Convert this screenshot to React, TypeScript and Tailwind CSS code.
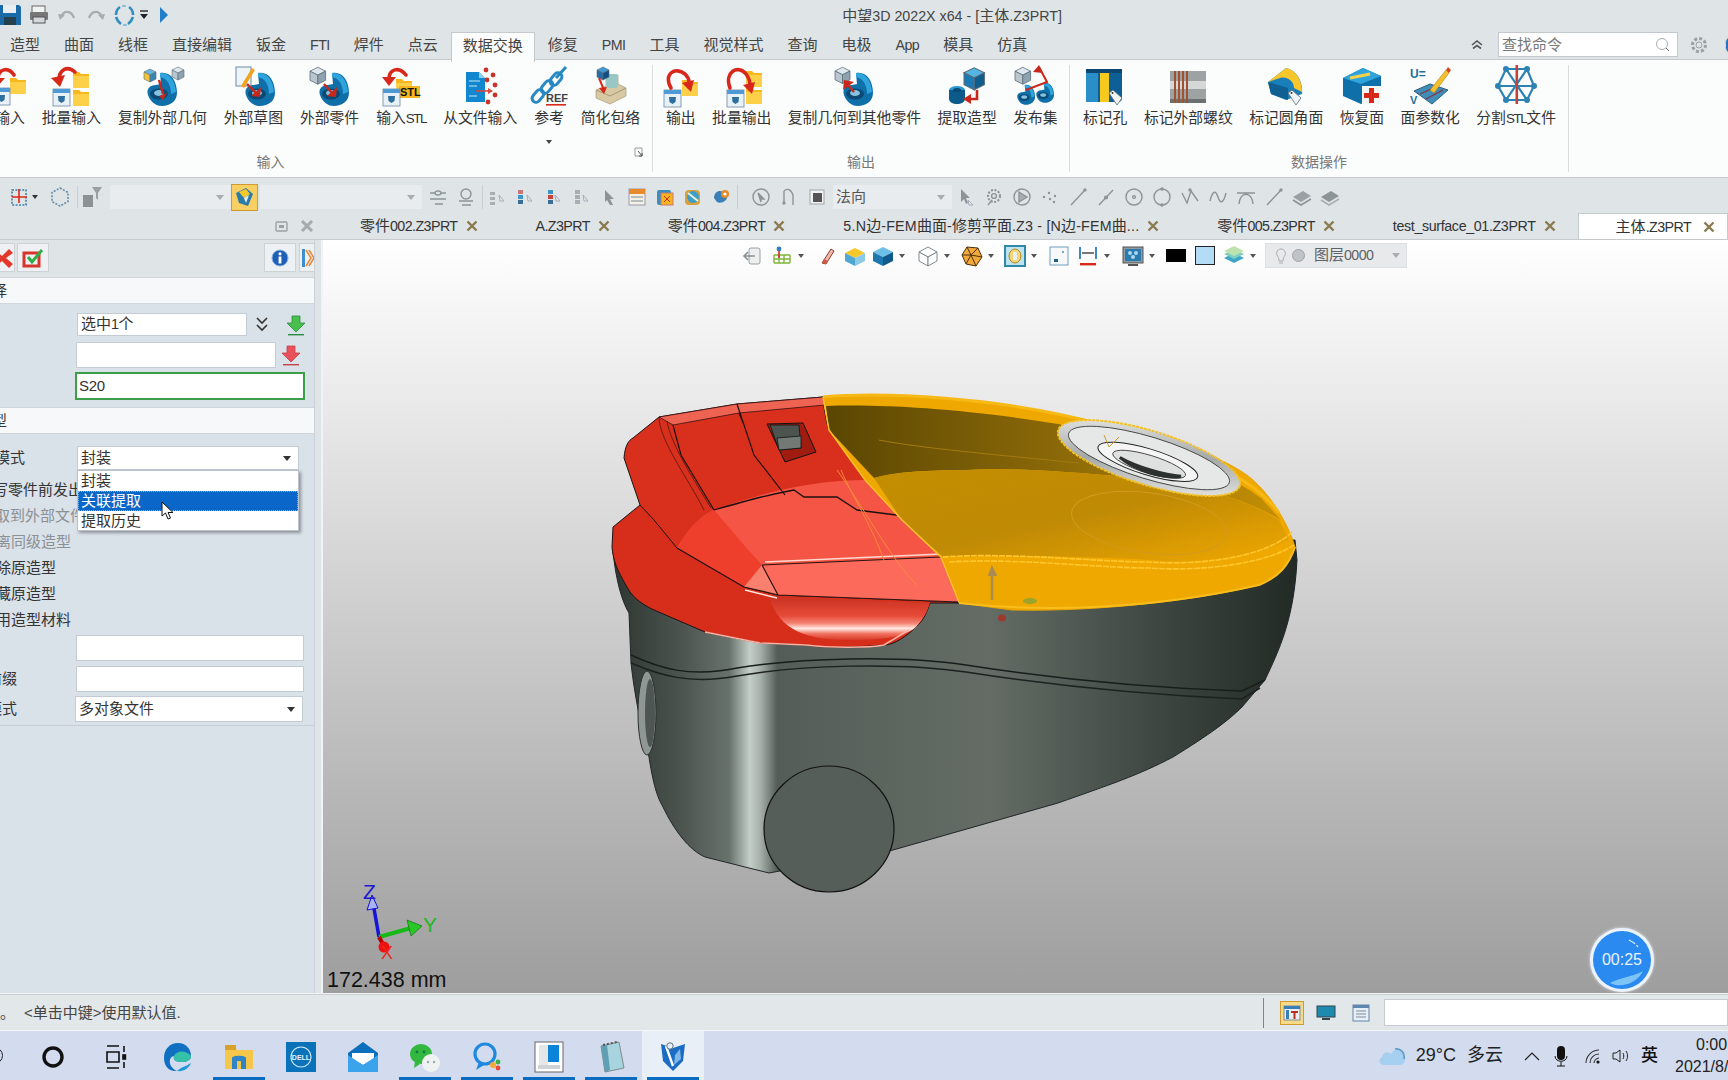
import React from "react";

const T = ({ s, l = "text-[0.95em] tracking-[-0.04em]" }: { s: string; l?: string }) => (
  <>
    {s.split(/([\u4e00-\u9fff。]+)/).filter(Boolean).map((p, i) =>
      /[\u4e00-\u9fff。]/.test(p) ? <span key={i}>{p}</span> : <span key={i} className={l}>{p}</span>
    )}
  </>
);

/* ---------- ribbon icon primitives ---------- */
const Part = ({ t = "" }: { t?: string }) => (
  <g transform={t}>
    <path d="M6 27C4 21 8 17 14 17L19 16L18 5C28 3 35 12 35 25C35 33 28 38 20 38C13 38 8 33 6 27Z" fill="#0f6fa8" />
    <path d="M18 5C27 4 33 12 34 24L29 26C29 17 25 10 18 9Z" fill="#2fa4dc" />
    <ellipse cx="17" cy="26" rx="9" ry="5.5" fill="#0a4a75" />
    <ellipse cx="17" cy="25" rx="5" ry="3" fill="#86c2df" />
  </g>
);
const Cube = ({ t = "", a = "#dfe7ee", b = "#b9c6d0", c = "#8fa2b0" }: { t?: string; a?: string; b?: string; c?: string }) => (
  <g transform={t} stroke="#5a6c78" strokeWidth="0.6">
    <path d="M0 4L6 1L12 4L6 7Z" fill={a} />
    <path d="M0 4L6 7V14L0 11Z" fill={b} />
    <path d="M12 4L6 7V14L12 11Z" fill={c} />
  </g>
);
const Folder = ({ t = "" }: { t?: string }) => (
  <g transform={t}>
    <path d="M0 2H6L8 4H16V18H0Z" fill="#f7b81f" />
    <path d="M0 6H16V18H0Z" fill="#fdd04a" />
  </g>
);
const Win = ({ t = "" }: { t?: string }) => (
  <g transform={t}>
    <rect width="17" height="17" fill="#e8f1f8" stroke="#6b8aa3" strokeWidth="0.8" />
    <rect width="17" height="4" fill="#4d9ad6" />
    <path d="M5 7H12L11.5 12L8.5 14L5.5 12Z" fill="#2f6f9d" />
  </g>
);
const RedArc = ({ d }: { d: string }) => <path d={d} fill="none" stroke="#d8281c" strokeWidth="3.6" strokeLinecap="round" />;
const Tag = ({ t = "" }: { t?: string }) => (
  <g transform={t}>
    <path d="M0 3L4 0L13 8L8 15Z" fill="#f2f4f4" stroke="#5d6b72" strokeWidth="0.8" />
    <circle cx="3.5" cy="3" r="1" fill="#333" />
  </g>
);

const icons: Record<string, React.ReactNode> = {
  imp: (<><Folder t="translate(20 10)" /><Win t="translate(3 22)" /><RedArc d="M24 9C18 0 8 3 8 13" /><path d="M1 12H15L8 20Z" fill="#d8281c" /></>),
  batch: (<><Folder t="translate(22 4)" /><Folder t="translate(22 22)" /><Win t="translate(2 23)" /><RedArc d="M24 6C16 -1 8 4 8 14" /><path d="M0 12L14 9L9 21Z" fill="#d8281c" /></>),
  copyExt: (<><Part t="translate(0 2)" /><Cube t="translate(2 2)" a="#67b6de" b="#f5c33b" c="#3a86b2" /><Cube t="translate(30 0)" /><path d="M17 14L21 28" stroke="#c8281c" strokeWidth="2.4" /><path d="M17 30L25 27L21 34Z" fill="#c8281c" /></>),
  sketch: (<><Part t="translate(7 2)" /><rect x="3" y="1" width="15" height="19" fill="#eef3f7" stroke="#6c8ca5" /><path d="M8 20L19 2L22 4L11 22Z" fill="#f0a41d" /><path d="M14 18L24 28" stroke="#c8281c" strokeWidth="2.4" /><path d="M28 21L27 31L18 30Z" fill="#c8281c" /></>),
  extPart: (<><Part t="translate(4 2)" /><Cube t="translate(0 0) scale(1.3)" /><path d="M14 18L22 27" stroke="#c8281c" strokeWidth="2.4" /><path d="M27 21L26 31L17 30Z" fill="#c8281c" /></>),
  stl: (<><Folder t="translate(15 11)" /><rect x="18" y="20" width="21" height="12" fill="#f4b71f" /><text x="19" y="30" fontSize="11" fontWeight="700" fill="#111" fontFamily="Liberation Sans">STL</text><Win t="translate(2 23)" /><RedArc d="M25 9C18 0 8 3 8 13" /><path d="M1 11H15L8 20Z" fill="#d8281c" /></>),
  file: (<><path d="M6 6H19L25 12V36H6Z" fill="#1187cf" /><path d="M19 6L25 12H19Z" fill="#8fd0f2" /><path d="M9 15H20M9 20H17M9 30H17" stroke="#c6e7f8" strokeWidth="1.2" /><path d="M16 25H29" stroke="#d8483c" strokeWidth="1.6" /><path d="M28 22L33 25L28 28Z" fill="#d8483c" /><g fill="#c8342c"><circle cx="26" cy="4" r="2.4" /><circle cx="33" cy="9" r="2.4" /><circle cx="27" cy="14" r="2.4" /><circle cx="35" cy="19" r="2.4" /><circle cx="35" cy="29" r="2.4" /><circle cx="28" cy="36" r="2.4" /></g></>),
  ref: (<><g fill="none" stroke="#2689c4" strokeWidth="3"><path d="M37 1L27 12" /><rect x="23" y="6" width="8" height="14" rx="4" transform="rotate(40 27 13)" /><rect x="14" y="14" width="8" height="14" rx="4" transform="rotate(40 18 21)" /><rect x="5" y="23" width="8" height="14" rx="4" transform="rotate(40 9 30)" /></g><text x="17" y="36" fontSize="11" fontWeight="700" fill="#444" fontFamily="Liberation Sans">REF</text><rect x="17" y="38" width="20" height="1.6" fill="#d8281c" /></>),
  simp: (<><path d="M6 32L20 38L36 30V22L28 18V9H16V20L6 24Z" fill="#d6c9a4" stroke="#a89a76" strokeWidth="0.7" /><rect x="16" y="8" width="12" height="14" rx="3" fill="#98c8c6" /><path d="M6 24L20 30L36 22" stroke="#a89a76" fill="none" /><Cube t="translate(7 0)" a="#3d9bd8" b="#1f6ea8" c="#124f80" /><path d="M9 12L14 24" stroke="#d8281c" strokeWidth="2" /><path d="M9 22L17 21L14 28Z" fill="#d8281c" /></>),
  exp: (<><Folder t="translate(21 12)" /><Win t="translate(3 24)" /><RedArc d="M10 22C2 8 14 0 24 8C27 11 28 14 28 16" /><path d="M21 17L33 14L30 26Z" fill="#d8281c" /></>),
  bexp: (<><Folder t="translate(24 3)" /><Folder t="translate(24 20)" /><Win t="translate(5 24)" /><RedArc d="M8 22C2 6 16 -2 24 8C27 12 28 16 28 19" /><path d="M21 19L33 16L30 28Z" fill="#d8281c" /></>),
  copyTo: (<><Part t="translate(4 2)" /><Cube t="translate(1 0) scale(1.25)" /><path d="M20 26L14 19" stroke="#c8281c" strokeWidth="2.4" /><path d="M9 24L10 14L20 16Z" fill="#c8281c" /></>),
  extract: (<><Cube t="translate(17 0) scale(1.7)" a="#55b5e4" b="#1b79b3" c="#0f5c8e" /><ellipse cx="10" cy="24" rx="8" ry="4" fill="#2b9ad4" /><path d="M2 24V33C2 36 6 38 10 38C14 38 18 36 18 33V24" fill="#0c5a8c" /><ellipse cx="10" cy="24" rx="4" ry="2" fill="#0a4a75" /><path d="M30 24V33H22" stroke="#c8281c" strokeWidth="2.6" fill="none" /><path d="M24 28V38L16 33Z" fill="#c8281c" /></>),
  publish: (<><Part t="translate(-1 16) scale(.6)" /><Part t="translate(18 14) scale(.6)" /><Cube t="translate(0 0) scale(1.3)" /><path d="M11 24L32 16L24 1" stroke="#c8281c" strokeWidth="2" fill="none" /><path d="M18 6L24 -1L28 7Z" fill="#c8281c" /></>),
  hole: (<><rect x="1" y="3" width="36" height="33" rx="4" fill="#0e5f96" /><rect x="1" y="3" width="12" height="33" fill="#2a8fc8" /><rect x="15" y="3" width="9" height="33" fill="#f5c91d" /><rect x="1" y="3" width="36" height="4" fill="#0a4670" /><Tag t="translate(24 24)" /></>),
  thread: (<><rect x="2" y="5" width="36" height="32" fill="#9da2a2" /><rect x="2" y="15" width="36" height="8" fill="#d6d8d8" /><rect x="2" y="33" width="36" height="4" fill="#6b7070" /><path d="M7 5V37M11 5V37M15 5V37M19 5V37" stroke="#a0512f" strokeWidth="2" /></>),
  fillet: (<><path d="M2 16L20 2C30 4 37 14 36 28L20 34L5 28Z" fill="#1a7fb8" /><path d="M2 16L20 2C30 4 36 14 36 26L28 22C28 16 22 10 14 12Z" fill="#f7c62a" /><path d="M2 16L22 22V34L5 28Z" fill="#0f5f92" /><Tag t="translate(22 24)" /></>),
  restore: (<><path d="M1 12L21 2L39 10V34L19 38L1 30Z" fill="#0f6fa8" /><path d="M1 12L21 2L39 10L19 18Z" fill="#2fa4dc" /><path d="M8 12L28 8" stroke="#f5d24a" strokeWidth="3" /><rect x="20" y="20" width="19" height="18" fill="#f4f6f6" /><path d="M27 22H32V27H37V32H32V37H27V32H22V27H27Z" fill="#d8281c" /></>),
  param: (<><path d="M4 25L20 18L38 24L22 38Z" fill="#3f8eb8" stroke="#2b5f7e" /><path d="M10 28L28 20M16 33L33 24" stroke="#8a2e45" strokeWidth="1.2" /><text x="0" y="12" fontSize="12" fontWeight="700" fill="#1e6f9e" fontFamily="Liberation Sans">U=</text><text x="0" y="38" fontSize="11" fontWeight="700" fill="#1e6f9e" fontFamily="Liberation Sans">V</text><path d="M20 24L36 4L39 7L24 27Z" fill="#f2c12d" stroke="#b9801a" strokeWidth=".6" /><path d="M36 4L38 1L41 4L39 7Z" fill="#d8481c" /></>),
  split: (<><g stroke="#2c82b2" strokeWidth="2.2" fill="none"><path d="M10 3H31L38 20L31 34H10L2 20ZM10 3L31 34M31 3L10 34M2 20H38" /></g><g fill="#2c82b2"><circle cx="10" cy="3" r="3" /><circle cx="31" cy="3" r="3" /><circle cx="38" cy="20" r="3" /><circle cx="31" cy="34" r="3" /><circle cx="10" cy="34" r="3" /><circle cx="2" cy="20" r="3" /></g><rect x="19.5" y="-1" width="2.6" height="39" fill="#c2433a" /></>),
};

type RI = { l: string; i: string; more?: boolean };
const G1: RI[] = [
  { l: "输入", i: "imp" }, { l: "批量输入", i: "batch" }, { l: "复制外部几何", i: "copyExt" }, { l: "外部草图", i: "sketch" },
  { l: "外部零件", i: "extPart" }, { l: "输入STL", i: "stl" }, { l: "从文件输入", i: "file" }, { l: "参考", i: "ref", more: true }, { l: "简化包络", i: "simp" },
];
const G2: RI[] = [
  { l: "输出", i: "exp" }, { l: "批量输出", i: "bexp" }, { l: "复制几何到其他零件", i: "copyTo" }, { l: "提取造型", i: "extract" }, { l: "发布集", i: "publish" },
];
const G3: RI[] = [
  { l: "标记孔", i: "hole" }, { l: "标记外部螺纹", i: "thread" }, { l: "标记圆角面", i: "fillet" }, { l: "恢复面", i: "restore" }, { l: "面参数化", i: "param" }, { l: "分割STL文件", i: "split" },
];

const RibbonItem = ({ it }: { it: RI }) => (
  <div className="flex flex-col items-center relative">
    <div className="w-0 h-[40px] flex justify-center">
      <svg width="40" height="40" viewBox="0 0 40 40" className="overflow-visible shrink-0">{icons[it.i]}</svg>
    </div>
    <div className="mt-[2px] h-[20px] leading-[20px] text-[14.8px] whitespace-nowrap text-[#333]"><T s={it.l} l="text-[0.9em] tracking-[-0.1em]" /></div>
    {it.more && <div className="mt-[12px] w-0 h-0 border-x-[3px] border-x-transparent border-t-[4px] border-t-[#444]" />}
  </div>
);

const RibbonGroup = ({ items, label, w, px, gap, neg, expand }: { items: RI[]; label: string; w: string; px: string; gap: string; neg?: boolean; expand?: boolean }) => (
  <div className={`${w} ${neg ? "ml-[-111px] justify-between" : ""} relative flex flex-col h-full border-r border-[#d9dcde] shrink-0`}>
    <div className={`flex ${gap} pt-[1px] ${px} ${neg ? "justify-end" : ""} h-[88px]`}>
      {items.map((it) => <RibbonItem key={it.l} it={it} />)}
    </div>
    <div className="text-center text-[14px] leading-[20px] text-[#777] mt-[4px]">{label}</div>
    {expand && (
      <svg width="10" height="10" viewBox="0 0 10 10" className="absolute right-[8px] bottom-[15px]"><path d="M1 1H8V9H1Z" fill="none" stroke="#999" /><path d="M4 4L8 9M8 6V9H5" stroke="#555" fill="none" /></svg>
    )}
  </div>
);

/* ---------- toolbar small icons ---------- */
const grey = { fill: "none", stroke: "#8d9498", strokeWidth: 1.4 } as const;
const tbIcons: React.ReactNode[] = [
  <g {...grey}><path d="M2 6H7M13 6H18M7 6a3 2 0 006 0a3 2 0 00-6 0M2 12H18M7 17H15" /></g>,
  <g {...grey}><circle cx="10" cy="7" r="5" /><path d="M3 14H17M6 18H15" /></g>,
  <g><path d="M3 5H8V8H3ZM3 10H8V13H3ZM3 15H8V18H3Z" fill="#a8aeb2" /><path d="M12 8L17 14L13 14Z" fill="#e6e9ea" stroke="#aab" /></g>,
  <g><path d="M3 3H8V7H3Z" fill="#c77" /><path d="M3 8H8V12H3Z" fill="#3a96c8" /><path d="M3 13H8V17H3Z" fill="#3a6e96" /><path d="M12 8L17 14L13 14Z" fill="#e6e9ea" stroke="#aab" /></g>,
  <g><path d="M5 3H10V7H5Z" fill="#3a96c8" /><path d="M5 8H10V12H5Z" fill="#c8443a" /><path d="M5 13H10V17H5Z" fill="#3a6e96" /><path d="M12 8L17 14L13 14Z" fill="#e6e9ea" stroke="#aab" /></g>,
  <g><path d="M4 3H9V7H4ZM4 8H9V12H4ZM4 13H9V17H4Z" fill="#a8aeb2" /><path d="M12 8L17 14L13 14Z" fill="#e6e9ea" stroke="#aab" /></g>,
  <path d="M6 3L15 12L11 12L14 18L11 18L8 13L6 15Z" fill="#8d9498" />,
  <g><rect x="2" y="2" width="16" height="16" fill="#f3f0e6" stroke="#99a" /><rect x="2" y="2" width="16" height="5" fill="#e88a2c" /><path d="M4 10H16M4 14H16" stroke="#7d8a92" /></g>,
  <g><rect x="2" y="3" width="14" height="15" rx="2" fill="#3a8fc0" /><rect x="6" y="6" width="12" height="12" fill="#f5b51f" stroke="#c77" /><path d="M9 9L15 15M15 9L9 15" stroke="#d8281c" /></g>,
  <g><rect x="2" y="3" width="15" height="15" rx="4" fill="#d8a13a" /><circle cx="10" cy="10" r="6" fill="#3d9ec9" /><path d="M5 6L15 14" stroke="#e9f1d8" strokeWidth="2" /></g>,
  <g><path d="M3 11C3 4 10 2 13 6L16 9C17 14 10 17 6 15" fill="#3a7fb8" /><circle cx="14" cy="7" r="4" fill="#e88a2c" /><circle cx="14" cy="7" r="1.6" fill="#fff" /></g>,
  <g {...grey}><circle cx="10" cy="10" r="8" /><path d="M7 6L13 12L10 12L10 15Z" fill="#8d9498" /></g>,
  <g {...grey}><path d="M5 4V16M14 8V18M5 4C8 1 12 2 14 8" /><circle cx="5" cy="16" r="1" /></g>,
  <g><rect x="3" y="3" width="14" height="14" fill="#f1f2f2" stroke="#a0a6a9" /><rect x="6" y="6" width="9" height="9" fill="#555" /></g>,
];
const tbIcons2: React.ReactNode[] = [
  <g><path d="M5 2L14 11L10 11L12 16L10 17L8 12L5 15Z" fill="#8d9498" /><path d="M12 13L17 18L13 18Z" fill="#e6e9ea" stroke="#aab" /></g>,
  <g {...grey}><circle cx="10" cy="9" r="6" strokeDasharray="2 1.5" strokeWidth="2" /><circle cx="10" cy="9" r="2.4" /><path d="M4 18L8 13" /></g>,
  <g {...grey}><circle cx="10" cy="10" r="8" /><path d="M7 5L15 10L7 15Z" fill="#a8aeb2" /></g>,
  <g fill="#8d9498"><circle cx="4" cy="10" r="1.2" /><circle cx="9" cy="6" r="1.2" /><circle cx="10" cy="12" r="1.2" /><circle cx="15" cy="9" r="1.2" /><circle cx="14" cy="15" r="1.2" /></g>,
  <g {...grey}><path d="M3 18L17 3" /><circle cx="17" cy="3" r="1" /></g>,
  <g {...grey}><path d="M3 18L17 3" /><circle cx="10" cy="10.5" r="1.4" /></g>,
  <g {...grey}><circle cx="10" cy="10" r="8" /><circle cx="10" cy="10" r="1.4" /></g>,
  <g {...grey}><circle cx="10" cy="10" r="8" /><circle cx="10" cy="2" r="1" /><circle cx="10" cy="18" r="1" /></g>,
  <g {...grey}><path d="M2 6L7 16L11 4L18 14" /><circle cx="10" cy="3" r="1" /></g>,
  <g {...grey}><path d="M2 14C5 2 8 4 10 10C12 16 15 18 18 6" /></g>,
  <g {...grey}><path d="M3 17C4 4 16 4 17 17M1 6H19" /></g>,
  <g {...grey}><path d="M3 18L17 3" /><circle cx="17" cy="3" r="1" fill="#8d9498" /></g>,
  <g><path d="M1 10L11 4L19 9L9 15Z" fill="#9aa0a3" /><path d="M1 13L9 18L19 12" stroke="#8d9498" strokeWidth="1.6" fill="none" /></g>,
  <g><path d="M1 10L11 4L19 9L9 15Z" fill="#8d9498" /><path d="M1 13L9 18L19 12" stroke="#a8aeb2" strokeWidth="1.6" fill="none" /></g>,
];

const Caret = ({ c = "#a8adb0" }: { c?: string }) => <div className={`w-0 h-0 border-x-[4px] border-x-transparent border-t-[5px]`} style={{ borderTopColor: c }} />;

const Tb = ({ children }: { children: React.ReactNode }) => (
  <div className="w-[28px] flex justify-center shrink-0"><svg width="20" height="20" viewBox="0 0 20 20">{children}</svg></div>
);

const Toolbar = () => (
  <div className="h-[35px] pt-[3px] flex items-center shrink-0 bg-[#dfe4e7]">
    <svg width="20" height="20" viewBox="0 0 20 20" className="ml-[10px]"><rect x="2" y="3" width="14" height="15" fill="none" stroke="#3d7fa6" strokeDasharray="2 1.4" strokeWidth="1.6" /><path d="M9 2V16M2 10H17" stroke="#d8281c" strokeWidth="1.6" /></svg>
    <div className="ml-[2px] w-0 h-0 border-x-[3px] border-x-transparent border-t-[4px] border-t-[#333]" />
    <svg width="22" height="22" viewBox="0 0 22 22" className="ml-[11px]"><path d="M11 2L19 6.5V15.5L11 20L3 15.5V6.5Z" fill="none" stroke="#5f8fa8" strokeWidth="1.6" strokeDasharray="2 1.4" /></svg>
    <div className="ml-[6px] w-px h-[22px] bg-[#c8cdd0]" />
    <svg width="22" height="22" viewBox="0 0 22 22" className="ml-[3px]"><rect x="2" y="9" width="10" height="12" fill="#8c9294" /><path d="M11 1H21L17 7V14L15 12V7Z" fill="#9aa0a2" /></svg>
    <div className="ml-[7px] w-[121px] h-[24px] bg-[#e9ecee] flex items-center justify-end pr-[7px]"><Caret /></div>
    <div className="w-[27px] h-[27px] bg-[#f7cf62] border border-[#d09a30] flex items-center justify-center shrink-0">
      <svg width="23" height="23" viewBox="0 0 23 23"><path d="M3 7L13 2L20 8L15 20L6 17Z" fill="#2a7ca8" /><path d="M6 6L13 3L17 8L11 12Z" fill="#f5c928" /><path d="M11 12L16 9L13 17Z" fill="#e9eef2" /></svg>
    </div>
    <div className="ml-[2px] w-[162px] h-[24px] bg-[#e9ecee] flex items-center justify-end pr-[7px]"><Caret /></div>
    <div className="ml-[2px] flex items-center">
      {tbIcons.slice(0, 2).map((c, i) => <Tb key={i}>{c}</Tb>)}
      <div className="w-px h-[24px] bg-[#c8cdd0] mx-[2px]" />
      <div className="ml-[-2px] flex">{tbIcons.slice(2, 11).map((c, i) => <Tb key={i}>{c}</Tb>)}</div>
      <div className="w-px h-[24px] bg-[#c8cdd0] ml-[2px] mr-[9px]" />
      {tbIcons.slice(11).map((c, i) => <Tb key={i}>{c}</Tb>)}
    </div>
    <div className="ml-[2px] w-[119px] h-[24px] bg-[#e9ecee] flex items-center justify-between pl-[3px] pr-[7px] text-[15px] text-[#555] leading-[24px] shrink-0">
      <span>法向</span><Caret />
    </div>
    <div className="flex">{tbIcons2.map((c, i) => <Tb key={i}>{c}</Tb>)}</div>
  </div>
);

const X = () => (
  <svg width="12" height="12" viewBox="0 0 12 12" className="shrink-0"><path d="M1.5 1.5L10.5 10.5M10.5 1.5L1.5 10.5" stroke="#8b7a4e" strokeWidth="2.4" /></svg>
);

const tabs: { t: string; l?: string }[] = [
  { t: "零件002.Z3PRT" },
  { t: "A.Z3PRT" },
  { t: "零件004.Z3PRT" },
  { t: "5.N边-FEM曲面-修剪平面.Z3 - [N边-FEM曲...", l: "text-[0.95em] tracking-[0.015em]" },
  { t: "零件005.Z3PRT" },
  { t: "test_surface_01.Z3PRT", l: "text-[0.95em] tracking-[-0.025em]" },
];

const TabBar = () => (
  <div className="h-[27px] flex shrink-0 bg-[#dfe4e7] text-[15px] leading-[27px] text-[#333] border-b border-[#c6cacd]">
    <div className="w-[331px] shrink-0 flex items-center pl-[275px] gap-[12px]">
      <svg width="13" height="11" viewBox="0 0 13 11"><rect x="1" y="1" width="11" height="9" rx="1" fill="none" stroke="#9ba1a5" strokeWidth="1.4" /><rect x="4" y="4" width="5" height="3" fill="#9ba1a5" /></svg>
      <svg width="14" height="12" viewBox="0 0 14 12"><path d="M2 1L12 11M12 1L2 11" stroke="#a4aaad" strokeWidth="3" /></svg>
    </div>
    {tabs.map(({ t, l }) => (
      <div key={t} className="pl-[29px] pr-[29px] flex items-center gap-[8px] whitespace-nowrap shrink-0"><span><T s={t} l={l} /></span><X /></div>
    ))}
    <div className="ml-[-7px] flex-1 bg-white border border-b-0 border-[#c6cacd] pl-[37px] flex items-center gap-[12px] whitespace-nowrap"><span><T s="主体.Z3PRT" /></span><X /></div>
  </div>
);

/* ---------- left panel ---------- */
const Field = ({ w, h, ml, children, cls = "" }: { w: string; h: string; ml: string; children?: React.ReactNode; cls?: string }) => (
  <div className={`${w} ${h} ${ml} bg-white border border-[#c3ccd4] ${cls} flex items-center px-[3px] text-[15px] text-[#333] shrink-0`}>{children}</div>
);
const Row = ({ text, ml, grey: g }: { text: string; ml: string; grey?: boolean }) => (
  <div className={`h-[26px] leading-[26px] text-[15px] whitespace-nowrap ${ml} ${g ? "text-[#8b9094]" : "text-[#333]"}`}>{text}</div>
);
const DL = ({ c, l }: { c: string; l: string }) => (
  <svg width="24" height="22" viewBox="0 0 24 22"><path d="M8 2H16V9H21L12 18L3 9H8Z" fill={c} stroke={l} strokeWidth="0.8" /><rect x="4" y="20" width="16" height="1.4" fill={l} /></svg>
);

const Panel = () => (
  <div className="w-[322px] shrink-0 bg-[#d9e1e9] flex relative border-r border-[#f0f2f4]">
    <div className="w-[315px] flex flex-col overflow-hidden">
      <div className="h-[37px] bg-[#dfe4e7] flex items-start pt-[3px] shrink-0">
        <div className="w-[15px] h-[29px] bg-[#eef1f3] border border-[#ccd2d6] border-l-0 flex items-center overflow-hidden">
          <svg width="14" height="22" viewBox="0 0 14 22"><path d="M-6 2L2 9L9 2L13 6L6 11L13 17L9 21L2 14L-6 21Z" fill="#e2382b" /></svg>
        </div>
        <div className="ml-[2px] w-[32px] h-[29px] bg-[#eef1f3] border border-[#ccd2d6] flex items-center justify-center">
          <svg width="22" height="20" viewBox="0 0 22 20"><rect x="2" y="5" width="15" height="13" fill="none" stroke="#d8362b" strokeWidth="3" /><path d="M6 9L10 14L20 2" fill="none" stroke="#2fae44" strokeWidth="3" /></svg>
        </div>
        <div className="ml-auto w-[32px] h-[29px] bg-[#eef1f3] border border-[#ccd2d6] flex items-center justify-center">
          <svg width="20" height="20" viewBox="0 0 20 20"><circle cx="10" cy="10" r="8" fill="#1f5fb8" stroke="#8ab4e0" /><rect x="8.6" y="8.5" width="2.8" height="7" fill="#fff" /><circle cx="10" cy="5.8" r="1.6" fill="#fff" /></svg>
        </div>
        <div className="ml-[3px] mr-[-1px] w-[16px] h-[29px] bg-[#eef1f3] border border-[#ccd2d6] flex items-center justify-center overflow-hidden">
          <svg width="14" height="22" viewBox="0 0 14 22"><rect x="2" y="2" width="3" height="18" fill="#3f8ed0" /><path d="M6 3L11 11L6 19M9 3L14 11L9 19" fill="none" stroke="#e8873a" strokeWidth="1.5" /></svg>
        </div>
      </div>
      <div className="h-[27px] bg-[#f6f8f9] border-y border-[#cfd6dc] text-[15px] leading-[26px] text-[#333] ml-[-8px] pl-0 shrink-0">择</div>
      <div className="h-[99px] pt-[9px] flex flex-col shrink-0">
        <div className="flex items-center h-[23px]">
          <Field w="w-[170px]" h="h-[23px]" ml="ml-[77px]"><T s="选中1个" /></Field>
          <svg width="14" height="16" viewBox="0 0 14 16" className="ml-[8px]"><path d="M2 1L7 6L12 1M2 8L7 13L12 8" fill="none" stroke="#333" strokeWidth="1.6" /></svg>
          <div className="ml-[15px]"><DL c="#49c04e" l="#2d8c43" /></div>
        </div>
        <div className="flex items-center h-[26px] mt-[6px]">
          <Field w="w-[200px]" h="h-[26px]" ml="ml-[76px]" />
          <div className="ml-[3px]"><DL c="#e8525a" l="#c94048" /></div>
        </div>
        <Field w="w-[230px]" h="h-[28px]" ml="ml-[75px] mt-[4px]" cls="!border-[#3c9e45] border-2 !px-[2px] tracking-[-0.02em]">S20</Field>
      </div>
      <div className="mt-[4px] h-[27px] bg-[#f6f8f9] border-y border-[#cfd6dc] text-[15px] leading-[26px] text-[#333] ml-[-8px] shrink-0">型</div>
      <div className="relative pt-[12px] flex-1 flex flex-col border-b-0">
        <div className="flex items-center h-[24px]">
          <div className="ml-[-5px] w-[82px] text-[15px] text-[#333] leading-[24px] whitespace-nowrap">模式</div>
          <div className="w-[222px] h-[24px] bg-white border border-[#c3ccd4] flex items-center justify-between pl-[3px] pr-[7px] text-[15px] text-[#333]"><span>封装</span><div className="w-0 h-0 border-x-[4px] border-x-transparent border-t-[5px] border-t-[#333]" /></div>
        </div>
        <div className="mt-[7px]">
          <Row text="写零件前发出" ml="ml-[-7px]" />
          <Row text="取到外部文件" ml="ml-[-5px]" grey />
          <Row text="离同级造型" ml="ml-[-4px]" grey />
          <Row text="除原造型" ml="ml-[-4px]" />
          <Row text="藏原造型" ml="ml-[-4px]" />
          <Row text="用造型材料" ml="ml-[-4px]" />
        </div>
        <Field w="w-[228px]" h="h-[26px]" ml="ml-[76px] mt-[2px]" />
        <div className="flex items-center mt-[5px] h-[26px]">
          <div className="ml-[-13px] w-[89px] text-[15px] leading-[26px] text-[#333] whitespace-nowrap">前缀</div>
          <Field w="w-[228px]" h="h-[26px]" ml="" />
        </div>
        <div className="flex items-center mt-[4px] h-[26px]">
          <div className="ml-[-13px] w-[88px] text-[15px] leading-[26px] text-[#333] whitespace-nowrap">模式</div>
          <div className="w-[228px] h-[26px] bg-white border border-[#c3ccd4] flex items-center justify-between pl-[3px] pr-[7px] text-[15px] text-[#333]"><span>多对象文件</span><div className="w-0 h-0 border-x-[4px] border-x-transparent border-t-[5px] border-t-[#333]" /></div>
        </div>
        <div className="mt-[3px] h-px bg-[#c6ced5]" />

        <div className="absolute left-[77px] top-[36px] w-[222px] h-[61px] bg-white border border-[#b9c2ca] shadow-[2px_2px_3px_rgba(0,0,0,0.35)] text-[15px] text-[#333] leading-[20px] flex flex-col">
          <div className="h-[20px] pl-[3px]">封装</div>
          <div className="h-[20px] pl-[2px] bg-[#0a66c8] text-white border border-dotted border-[#7fb0e0] leading-[18px]">关联提取</div>
          <div className="h-[20px] pl-[3px]">提取历史</div>
          <svg width="14" height="20" viewBox="0 0 14 20" className="absolute left-[83px] top-[30px]"><path d="M1 1V15L4.5 12L7 18L9.5 17L7 11.5H12Z" fill="#fff" stroke="#111" strokeWidth="1" /></svg>
        </div>
      </div>
    </div>
    <div className="w-[7px] bg-[#dfe4e7] border-l border-[#c9d0d6]" />
  </div>
);

/* ---------- 3D model drawing ---------- */
const Model = () => (
  <svg className="absolute inset-0" width="1404" height="754" viewBox="324 240 1404 754">
    <defs>
      <linearGradient id="body" x1="0" x2="1" y1="0" y2="0">
        <stop offset="0" stopColor="#2e3632" />
        <stop offset="0.1" stopColor="#4c5450" />
        <stop offset="0.17" stopColor="#68726c" />
        <stop offset="0.2" stopColor="#c4cec8" />
        <stop offset="0.215" stopColor="#a8b2ac" />
        <stop offset="0.24" stopColor="#555d58" />
        <stop offset="0.55" stopColor="#646c65" />
        <stop offset="0.8" stopColor="#3e4642" />
        <stop offset="1" stopColor="#222a26" />
      </linearGradient>
      <linearGradient id="up" x1="0" x2="1" y1="0" y2="0">
        <stop offset="0" stopColor="#5a4602" />
        <stop offset="0.5" stopColor="#8a6808" />
        <stop offset="1" stopColor="#c48f05" />
      </linearGradient>
      <linearGradient id="lowy" x1="0" x2="1" y1="0" y2="1">
        <stop offset="0" stopColor="#c48e00" />
        <stop offset="0.5" stopColor="#bf8a05" />
        <stop offset="1" stopColor="#f0a800" />
      </linearGradient>
      <linearGradient id="bulge" x1="0" x2="0" y1="0" y2="1">
        <stop offset="0" stopColor="#c9301f" />
        <stop offset="0.45" stopColor="#e64a38" />
        <stop offset="0.62" stopColor="#f68474" />
        <stop offset="0.74" stopColor="#ffe9e2" />
        <stop offset="0.86" stopColor="#f0705e" />
        <stop offset="1" stopColor="#d83a26" />
      </linearGradient>
      <linearGradient id="ring" x1="0" x2="1" y1="0" y2="1">
        <stop offset="0" stopColor="#f4f5f4" />
        <stop offset="0.5" stopColor="#a5a9a8" />
        <stop offset="1" stopColor="#f6f6f4" />
      </linearGradient>
    </defs>

    <path d="M614 550C616 575 622 600 630 613L632 663C636 700 645 740 650 757C655 790 660 800 664 807C675 830 690 850 706 857L770 873L894 850L1059 803C1110 785 1140 775 1174 757C1210 735 1230 720 1243 707L1266 680C1280 650 1295 620 1298 560L1296 540Z" fill="url(#body)" stroke="#20262a" strokeWidth="1" />
    <path d="M632 663C660 675 690 685 738 676C800 665 900 662 967 672C1050 685 1150 695 1243 699L1261 688" fill="none" stroke="#1c2220" strokeWidth="1.5" />
    <path d="M632 655C660 668 690 678 738 668C800 658 900 655 967 665C1050 678 1150 688 1243 691L1266 680" fill="none" stroke="#181e1c" strokeWidth="1.5" />
    <ellipse cx="648" cy="713" rx="9" ry="42" fill="#8f9794" stroke="#2a302d" />
    <ellipse cx="651" cy="713" rx="5" ry="34" fill="#4e5552" />

    {/* red lower rim */}
    <path d="M960 603L931 603C928 612 925 620 917 627C908 636 895 645 885 645C850 648 820 648 807 645L761 643L706 632L655 610C640 603 632 595 628 587C618 570 614 560 613 547L614 527L641 505L780 560Z" fill="#d72e1c" stroke="#1a1414" />
    <path d="M770 596L931 603C928 612 925 618 917 627C905 638 880 640 850 640C810 640 780 632 770 596Z" fill="url(#bulge)" />
    <path d="M706 632L761 643L807 645C830 648 870 648 885 645L910 630" fill="none" stroke="#ffb0a0" strokeWidth="1.5" />

    {/* upper lid */}
    <path d="M641 505L625 458C626 445 630 440 634 438L660 417L738 404L824 397C826 420 830 430 830 430L866 480L903 520L942 557L960 602L779 595L745 587L678 548L655 520Z" fill="#d92f1d" stroke="#1a1414" />
    <path d="M660 417L738 404L824 397L826 405L740 413L674 425Z" fill="#ef6353" stroke="#311" strokeWidth=".8" />
    <path d="M690 530C700 518 708 513 715 510C770 490 820 480 866 480L903 520L942 557L960 602L779 595L745 587L678 548Z" fill="#f45545" />
    <path d="M678 548C682 540 686 535 690 530C700 518 708 513 715 510L745 545L763 565L745 587Z" fill="#ee3f2c" />
    <path d="M763 565L942 557L960 602L779 595Z" fill="#fb6a5b" />
    <path d="M745 587L763 565L779 595Z" fill="#f97f6e" />
    <path d="M715 510C760 497 770 495 795 490L805 497L838 497L858 510L905 516" fill="none" stroke="#1f1010" strokeWidth="1.3" />
    <path d="M674 425L682 455L715 510M738 404L755 455L786 495M740 413L745 425" fill="none" stroke="#1f1010" strokeWidth="1.2" />
    <path d="M660 417C660 440 690 480 705 510M668 421C672 445 695 480 712 508" fill="none" stroke="#701c10" />
    <path d="M763 565L942 557M745 587L779 595L960 602M763 565L779 595M678 548L745 587" fill="none" stroke="#2a1410" strokeWidth="1.2" />
    <path d="M766 562L942 554" stroke="#ffd9d0" strokeWidth="1.5" />
    <path d="M746 590L778 598" stroke="#ffe5de" strokeWidth="1.5" />
    <path d="M842 470C855 500 870 520 885 560M838 470C860 500 892 560 918 585" fill="none" stroke="#f88a3a" strokeWidth="1" />
    {/* latch */}
    <path d="M768 424L804 423L817 452L786 462Z" fill="#a01c10" stroke="#111" strokeWidth="1" />
    <path d="M771 425L800 425L802 448L780 450Z" fill="#4c5450" stroke="#111" strokeWidth=".8" />
    <path d="M778 438L802 436L802 448L780 450Z" fill="#727a76" stroke="#111" strokeWidth=".8" />

    {/* yellow cover */}
    <path d="M824 397C850 394 900 395 940 398C1040 405 1130 428 1197 450C1230 462 1250 475 1257 483C1270 495 1288 520 1296 547C1290 565 1280 577 1260 585C1200 600 1100 612 1013 610L960 603L942 557L903 520L866 480L830 430Z" fill="#efa800" stroke="#e8a400" strokeWidth="1" />
    <path d="M827 406C880 404 960 408 1059 424C1130 438 1210 460 1262 498L1282 520C1240 495 1180 480 1105 475C1050 470 1000 468 967 470C930 470 895 472 875 478L830 430Z" fill="url(#up)" />
    <path d="M875 478C895 472 930 470 967 470C1000 468 1050 470 1105 475C1180 480 1240 495 1280 520L1290 540C1260 555 1200 565 1150 560C1080 556 1000 555 944 557L903 520Z" fill="url(#lowy)" />
    <path d="M944 557C1010 552 1100 562 1150 562C1210 566 1270 555 1293 532M950 562C1020 558 1100 568 1150 568C1210 572 1270 562 1295 545" fill="none" stroke="#ffc62e" strokeWidth="1.6" strokeDasharray="6 1" />
    <path d="M824 397C880 392 1000 396 1105 425C1170 445 1250 470 1280 513" fill="none" stroke="#f7b915" strokeWidth="3" />
    <path d="M960 603C1040 612 1150 610 1260 585C1280 577 1290 565 1296 547" fill="none" stroke="#f9bd1c" strokeWidth="2" />
    <path d="M824 397L830 430L866 480L903 520L942 557L960 602" fill="none" stroke="#ffc12a" strokeWidth="1.4" />
    <ellipse cx="1150" cy="523" rx="78" ry="30" fill="none" stroke="#d29a20" strokeWidth="1" transform="rotate(8 1150 523)" />
    <path d="M880 440C920 448 1000 455 1080 463" fill="none" stroke="#a37a12" strokeWidth="1" />

    {/* ring */}
    <g transform="rotate(17 1150 458)">
      <ellipse cx="1150" cy="458" rx="95" ry="27" fill="url(#ring)" stroke="#f2c12a" strokeDasharray="3 1" strokeWidth="2" />
      <ellipse cx="1150" cy="458" rx="84" ry="21" fill="#e6e8e7" stroke="#333" strokeWidth=".8" />
      <ellipse cx="1150" cy="462" rx="52" ry="13" fill="#f4f5f4" stroke="#222" strokeWidth="1" />
      <ellipse cx="1152" cy="464" rx="38" ry="9" fill="#dfe1e0" stroke="#333" strokeWidth=".8" />
      <path d="M1122 466C1140 474 1170 474 1186 466C1170 470 1140 470 1122 466Z" fill="#2c302f" stroke="#2c302f" strokeWidth="3" />
    </g>
    <path d="M1105 435L1110 447L1120 437" fill="none" stroke="#c99a30" />

    {/* origin triad ghost */}
    <path d="M993 600L993 570M990 576L993 568L997 576" stroke="#a98c52" strokeWidth="2.5" fill="#a98c52" />
    <ellipse cx="1031" cy="601" rx="7" ry="3" fill="#9aa32b" />
    <ellipse cx="1003" cy="618" rx="4" ry="3.5" fill="#9c3b2c" />

    {/* wheel */}
    <ellipse cx="830" cy="829" rx="65" ry="63" fill="#565e59" stroke="#111" strokeWidth="1.2" />

    {/* axis triad */}
    <path d="M380 937L373 897" stroke="#1414d8" strokeWidth="3.5" />
    <path d="M373 895L368 910L379 908Z" fill="#a9b4f0" stroke="#1414d8" />
    <path d="M380 937L412 928" stroke="#18b818" strokeWidth="4" />
    <path d="M423 926L408 920L412 936Z" fill="#28c828" stroke="#107010" strokeWidth=".7" />
    <path d="M380 937L385 946" stroke="#b00" strokeWidth="4" />
    <circle cx="385" cy="947" r="5.5" fill="#f01010" />
  </svg>
);

const Viewport = () => (
  <div className="relative flex-1 bg-linear-to-b from-[#ffffff] to-[#9e9e9e] border-l border-[#f2f3f4] overflow-hidden">
    <Model />
    <div className="absolute left-[40px] top-[640px] text-[21px] leading-[24px] text-[#1b1bd0]">Z</div>
    <div className="absolute left-[100px] top-[673px] text-[21px] leading-[24px] text-[#1fb81f]">Y</div>
    <div className="absolute left-[58px] top-[702px] text-[18px] leading-[22px] text-[#e82a1e]">X</div>
    <div className="absolute left-[4px] bottom-[0px] text-[21.5px] leading-[26px] text-[#111]">172.438 mm</div>

    <div className="absolute left-[418px] top-[3px] flex items-center h-[25px]">
      <VT />
    </div>

    <div className="absolute left-[1267px] top-[688px] w-[64px] h-[64px] rounded-full bg-[#2b8af0] border-[3px] border-white/90 shadow-[0_0_3px_rgba(255,255,255,0.8)] flex items-center justify-center text-[16px] text-[#e8f3ff] overflow-hidden">
      <svg width="58" height="58" viewBox="0 0 58 58" className="absolute"><path d="M36 9C40 11 43 13 45 16" fill="none" stroke="#e8f3ff" strokeWidth="1.2" strokeDasharray="7 2" /><path d="M17 52C28 46 40 46 50 40C44 52 28 58 17 52Z" fill="#7cc4f6" /></svg>
      <span className="relative">00:25</span>
    </div>
  </div>
);

const mini = "w-0 h-0 border-x-[3px] border-x-transparent border-t-[4px] border-t-[#555] ml-[5px] shrink-0";
const VIc = ({ c, w = 22, cls = "" }: { c: React.ReactNode; w?: number; cls?: string }) => (
  <svg width={w} height="22" viewBox="0 0 22 22" className={`shrink-0 ${cls}`}>{c}</svg>
);
const VT = () => (
  <>
    <VIc c={<g><rect x="8" y="3" width="11" height="16" rx="2" fill="#eee" stroke="#9aa0a3" /><path d="M14 11H3M7 7L3 11L7 15" fill="none" stroke="#8a9094" strokeWidth="1.6" /></g>} />
    <VIc cls="ml-[8px]" c={<g><path d="M3 10H19M3 14H19M3 18H19M3 10V18M8 10V18M13 10V18M19 10V18" stroke="#7fb53c" strokeWidth="1.4" fill="none" /><circle cx="8" cy="4" r="2.4" fill="#2f7fc0" /><path d="M8 6V13" stroke="#d8281c" strokeWidth="1.6" /></g>} />
    <div className={mini} />
    <VIc cls="ml-[11px]" c={<g><path d="M7 18L16 4L19 6L11 19Z" fill="#f2b8a8" stroke="#8a3c30" /><path d="M7 18L9 14L13 16L11 19Z" fill="#d05a40" /></g>} />
    <VIc cls="ml-[7px]" c={<g><path d="M1 8L11 3L21 8L11 13Z" fill="#f5c728" /><path d="M1 8L11 13V21L1 16Z" fill="#4fa8d4" /><path d="M21 8L11 13V21L21 16Z" fill="#8ccbe8" /></g>} />
    <VIc cls="ml-[6px]" c={<g><path d="M1 7L11 2L21 7L11 12Z" fill="#6cc0e8" /><path d="M1 7L11 12V21L1 16Z" fill="#1d77ad" /><path d="M21 7L11 12V21L21 16Z" fill="#0f5a8c" /></g>} />
    <div className={mini} />
    <VIc cls="ml-[12px]" c={<g fill="#fdfdfd" stroke="#7f8a90"><path d="M2 7L11 2L20 7L11 12Z" /><path d="M2 7L11 12V21L2 16Z" /><path d="M20 7L11 12V21L20 16Z" /></g>} />
    <div className={mini} />
    <VIc cls="ml-[11px]" c={<g><path d="M6 2L17 3L21 12L15 21L5 19L1 10Z" fill="#f3a83a" stroke="#4a3210" /><path d="M6 2L10 10L17 3M10 10L21 12M10 10L15 21M10 10L5 19M10 10L1 10" stroke="#4a3210" fill="none" /></g>} />
    <div className={mini} />
    <VIc cls="ml-[10px]" c={<g><rect x="1" y="1" width="20" height="20" fill="#bfe3f0" stroke="#2f8aa8" strokeWidth="2" /><ellipse cx="11" cy="11" rx="6" ry="7" fill="#f3d774" stroke="#b58a20" /><rect x="9" y="7" width="4" height="8" fill="#eee" /></g>} />
    <div className={mini} />
    <VIc cls="ml-[11px]" c={<g><rect x="2" y="2" width="18" height="18" fill="#f6f8f9" stroke="#6fa0bd" /><rect x="6" y="14" width="4" height="3" fill="#1d5f8c" /><rect x="14" y="6" width="2" height="2" fill="#7ab" /></g>} />
    <VIc cls="ml-[7px]" c={<g><path d="M3 2V14M19 2V14" stroke="#3a8abf" strokeWidth="2" /><path d="M5 8H17" stroke="#555" strokeWidth="1.6" /><rect x="3" y="18" width="16" height="2.4" fill="#d8281c" /></g>} />
    <div className={mini} />
    <VIc cls="ml-[12px]" c={<g><rect x="1" y="2" width="20" height="16" fill="#8f9aa1" stroke="#555" /><rect x="3" y="4" width="16" height="12" fill="#2a7bb0" /><circle cx="8" cy="8" r="2" fill="#a9d8ee" /><circle cx="14" cy="8" r="2" fill="#a9d8ee" /><circle cx="11" cy="12" r="2" fill="#a9d8ee" /><rect x="6" y="19" width="10" height="2" fill="#555" /></g>} />
    <div className={mini} />
    <div className="ml-[11px] w-[20px] h-[13px] bg-black shrink-0" />
    <div className="ml-[9px] w-[20px] h-[19px] bg-[#b4dcf6] border border-[#222] shrink-0" />
    <VIc cls="ml-[8px]" c={<g><path d="M1 13L11 18L21 13L11 8Z" fill="#3fa6c8" /><path d="M1 9L11 14L21 9L11 4Z" fill="#7fcfc0" /><path d="M1 6L11 11L21 6L11 1Z" fill="#bfe3b0" /></g>} />
    <div className={mini} />
    <div className="ml-[9px] w-[142px] h-[25px] bg-[#e7e9ea] border border-[#dde0e2] flex items-center pl-[9px] pr-[6px] text-[15px] text-[#5f6366] shrink-0">
      <svg width="12" height="18" viewBox="0 0 12 18"><path d="M6 2C2 2 1 6 2 8C3 10 4 11 4 14H8C8 11 9 10 10 8C11 6 10 2 6 2ZM4 16H8" fill="none" stroke="#a8adb0" /></svg>
      <span className="ml-[5px] w-[13px] h-[13px] rounded-full bg-[#bfc4c6] border border-[#9ea3a6] shrink-0" />
      <span className="ml-[9px] whitespace-nowrap"><T s="图层0000" /></span>
      <div className="ml-auto"><Caret /></div>
    </div>
  </>
);

const Status = () => (
  <div className="h-[36px] shrink-0 flex items-center bg-[#e2e7e9] border-t border-[#c9cfd3] text-[15px] text-[#444] whitespace-nowrap">
    <span className="w-[24px] pt-[2px]">。</span>
    <span className="pt-[2px] w-[158px]">&lt;单击中键&gt;使用默认值.</span>
    <div className="ml-[1081px] w-px h-[30px] bg-[#7e8589]" />
    <div className="ml-[16px] w-[24px] h-[24px] bg-[#f7d98a] border border-[#cf9a30] flex items-center justify-center">
      <svg width="18" height="18" viewBox="0 0 18 18"><rect x="1" y="2" width="16" height="14" fill="#e8eef2" stroke="#7d8d98" /><rect x="1" y="2" width="16" height="3" fill="#3a7fb8" /><rect x="3" y="6" width="3" height="9" fill="#3a7fb8" /><path d="M8 7H15V9H12.5V15H10.5V9H8Z" fill="#b8321c" /></svg>
    </div>
    <svg width="20" height="18" viewBox="0 0 20 18" className="ml-[12px]"><rect x="1" y="2" width="18" height="11" fill="#1d8bb0" stroke="#33454f" /><rect x="6" y="14" width="8" height="2" fill="#33454f" /></svg>
    <svg width="18" height="18" viewBox="0 0 18 18" className="ml-[16px]"><rect x="1" y="1" width="16" height="16" fill="#e8eef5" stroke="#5f86ad" /><rect x="1" y="1" width="16" height="3" fill="#5f86ad" /><path d="M4 7H14M4 10H14M4 13H14" stroke="#7d8d98" /></svg>
    <div className="ml-[14px] flex-1 h-[27px] bg-white border border-[#c6cbcf]" />
  </div>
);

const tbItems: { u?: boolean; active?: boolean; c: React.ReactNode }[] = [
  { c: <circle cx="16" cy="16" r="9" fill="none" stroke="#111" strokeWidth="3.4" /> },
  { c: <g stroke="#111" strokeWidth="1.6" fill="none"><path d="M8 5H20M8 27H20M8 11H20V21H8Z" /><path d="M25 5V11M25 21V27" /><rect x="24" y="14" width="2.4" height="4" fill="#111" /></g> },
  { c: <g><path d="M3 17C3 8 9 2 17 2C25 2 30 8 30 15C30 19 26 21 20 21C14 21 12 18 13 15C7 16 7 26 16 30C8 31 3 25 3 17Z" fill="#0f6fc0" /><path d="M13 15C15 9 26 9 30 15C30 19 26 21 20 21C14 21 12 18 13 15Z" fill="#35c1a8" /><path d="M16 30C23 31 28 27 30 22C24 26 20 26 16 30Z" fill="#1f97d8" /></g> },
  { u: true, c: <g><path d="M2 6H12L14 9H30V28H2Z" fill="#f6c64a" /><path d="M2 4H13V9H2Z" fill="#d9a02a" /><path d="M9 28V17C9 14 23 14 23 17V28H18V20H14V28Z" fill="#2f84c8" /></g> },
  { c: <g><rect x="1" y="1" width="30" height="30" fill="#0a72b9" /><circle cx="16" cy="16" r="10" fill="none" stroke="#cfe7f7" strokeWidth="1.2" /><text x="16" y="18.5" textAnchor="middle" fontSize="7" fontWeight="700" fill="#e6f3fb" fontFamily="Liberation Sans">DELL</text></g> },
  { c: <g><path d="M1 12L16 1L31 12V31H1Z" fill="#0b6fbe" /><path d="M5 12H27V18L16 24L5 18Z" fill="#fff" /><path d="M1 14L16 24L31 14V31H1Z" fill="#3aa3ec" /></g> },
  { u: true, c: <g><ellipse cx="12" cy="13" rx="11" ry="10" fill="#33b83f" /><path d="M6 20L5 27L11 23Z" fill="#33b83f" /><circle cx="22" cy="22" r="9" fill="#f0f2f2" /><circle cx="8" cy="11" r="1.4" fill="#174" /><circle cx="15" cy="11" r="1.4" fill="#174" /><circle cx="19" cy="21" r="1.2" fill="#9aa" /><circle cx="25" cy="21" r="1.2" fill="#9aa" /></g> },
  { u: true, c: <g><circle cx="14" cy="13" r="10" fill="none" stroke="#1f88e0" strokeWidth="3.2" /><path d="M8 21L5 29L13 24Z" fill="#1f88e0" /><circle cx="22" cy="24" r="3" fill="#f3a93a" /><circle cx="27" cy="21" r="2.4" fill="#37b04a" /><circle cx="27" cy="27" r="2.4" fill="#e8483a" /></g> },
  { u: true, c: <g><rect x="2" y="1" width="28" height="30" fill="#fff" stroke="#666" /><rect x="15" y="4" width="11" height="17" fill="#0a83d8" /><rect x="6" y="4" width="9" height="20" fill="#e4e7e8" /><rect x="5" y="24" width="22" height="4" fill="#cfd3d5" /></g> },
  { u: true, c: <g><path d="M6 5L24 1L29 27L10 31Z" fill="#a8d4df" stroke="#7d8a8f" /><path d="M6 5L12 4L15 29L10 31Z" fill="#5e9fb4" /><path d="M8 4L22 1" stroke="#555" strokeWidth="2" strokeDasharray="2 2" /></g> },
  { u: true, active: true, c: <g><path d="M4 3L16 7L28 3L26 20L16 30L6 20Z" fill="#1a6cc4" /><path d="M9 5L16 25" stroke="#fff" strokeWidth="2.4" /><circle cx="13" cy="5" r="3.2" fill="#e8eef2" stroke="#5a7080" /><path d="M18 14L23 8L24 18L17 24Z" fill="#7fb7e8" /></g> },
];

const Taskbar = () => (
  <div className="h-[50px] shrink-0 bg-[#d2dcee] border-t border-[#f4f6f8] flex items-stretch text-[#111] overflow-hidden">
    <div className="w-[22px] shrink-0 overflow-hidden relative flex items-center">
      <div className="ml-[-14px] w-[17px] h-[17px] rounded-full border-[1.5px] border-[#222] shrink-0" />
    </div>
    {tbItems.map((it, i) => (
      <div key={i} className={`w-[62px] shrink-0 flex flex-col items-center justify-between pt-[10px] ${it.active ? "bg-[#e9eff6]" : ""}`}>
        <svg width="32" height="32" viewBox="0 0 32 32">{it.c}</svg>
        {it.u ? <div className="w-[52px] h-[3px] bg-[#0a6cc0]" /> : <div className="h-[3px]" />}
      </div>
    ))}
    <div className="ml-auto flex items-center pr-0 whitespace-nowrap">
      <svg width="30" height="22" viewBox="0 0 30 22"><path d="M7 20C2 20 1 14 5 12C6 7 11 6 14 9C16 3 26 3 27 11C30 14 27 20 23 20Z" fill="#a6d0ef" /><path d="M18 4C24 3 28 8 27 14" fill="none" stroke="#5e9cc8" strokeWidth="1.6" /></svg>
      <span className="ml-[9px] text-[18px] text-[#222]">29°C</span>
      <span className="ml-[11px] text-[18px] text-[#222]">多云</span>
      <svg width="16" height="10" viewBox="0 0 16 10" className="ml-[21px]"><path d="M1 9L8 2L15 9" fill="none" stroke="#222" strokeWidth="1.2" /></svg>
      <svg width="14" height="22" viewBox="0 0 14 22" className="ml-[14px]"><rect x="3" y="1" width="8" height="14" rx="4" fill="#111" /><path d="M1 11C1 18 13 18 13 11M7 17V21M3 21H11" fill="none" stroke="#111" /></svg>
      <svg width="18" height="16" viewBox="0 0 18 16" className="ml-[16px]"><path d="M2 15C2 8 8 2 15 2M6 15C6 10 10 6 15 6M10 15C10 13 12 10 15 10" fill="none" stroke="#333" strokeWidth="1.1" /><circle cx="14" cy="14" r="1.6" fill="#111" /></svg>
      <svg width="20" height="16" viewBox="0 0 20 16" className="ml-[9px]"><path d="M2 5H5L9 2V14L5 11H2Z" fill="none" stroke="#222" /><path d="M12 5C13 7 13 9 12 11M15 3C17 6 17 10 15 13" fill="none" stroke="#222" /></svg>
      <span className="ml-[10px] text-[17px] font-medium">英</span>
      <div className="ml-[17px] w-[53px] flex flex-col items-start text-[16px] leading-[22px] text-[#222] overflow-hidden">
        <span className="ml-[21px]">0:00</span>
        <span>2021/8/</span>
      </div>
    </div>
  </div>
);

export default function App() {
  return (
    <div className="w-[1728px] h-[1080px] overflow-hidden flex flex-col bg-[#dfe4e7] font-['Liberation_Sans','Noto_Sans_CJK_SC',sans-serif]">
      {/* title bar */}
      <div className="h-[30px] shrink-0 flex items-center relative">
        <svg width="21" height="22" viewBox="0 0 21 22" className="ml-0"><path d="M0 1H19L21 3V21H0Z" fill="#1a6aa8" /><rect x="3" y="1" width="13" height="8" fill="#e8eef2" /><rect x="4" y="13" width="12" height="8" fill="#24404f" /></svg>
        <svg width="20" height="20" viewBox="0 0 20 20" className="ml-[8px]"><rect x="3" y="1" width="13" height="7" fill="#f1f2f2" stroke="#666" /><rect x="1" y="7" width="18" height="8" rx="1" fill="#777" /><rect x="4" y="12" width="12" height="6" fill="#d5d8da" stroke="#555" /></svg>
        <svg width="18" height="12" viewBox="0 0 18 12" className="ml-[9px]"><path d="M3 8C6 1 13 1 16 9" fill="none" stroke="#a8adb0" strokeWidth="2.4" /><path d="M0 5L7 6L2 11Z" fill="#a8adb0" /></svg>
        <svg width="18" height="12" viewBox="0 0 18 12" className="ml-[11px]"><path d="M15 8C12 1 5 1 2 9" fill="none" stroke="#a8adb0" strokeWidth="2.4" /><path d="M18 5L11 6L16 11Z" fill="#a8adb0" /></svg>
        <svg width="21" height="22" viewBox="0 0 21 22" className="ml-[9px]"><path d="M6 3C3 5 2 8 2 11M15 3C18 5 19 8 19 11M2 13C3 16 4 18 7 20M19 13C18 16 17 18 14 20" fill="none" stroke="#2f8fc0" strokeWidth="2.6" /><path d="M8 2L12 2M9 21H13" stroke="#8cc0d8" strokeWidth="2" /></svg>
        <svg width="10" height="12" viewBox="0 0 10 12" className="ml-[4px]"><path d="M1 2H9" stroke="#222" strokeWidth="1.4" /><path d="M1 5H9L5 10Z" fill="#222" /></svg>
        <svg width="10" height="16" viewBox="0 0 10 16" className="ml-[10px]"><path d="M1 0L9 8L1 16Z" fill="#1f7fc8" /></svg>
        <div className="ml-auto mr-[666px] pt-[2px] text-[15px] leading-[20px] text-[#444] whitespace-nowrap"><T s="中望3D 2022X x64 - [主体.Z3PRT]" l="text-[0.95em]" /></div>
      </div>

      {/* menu tabs */}
      <div className="h-[30px] shrink-0 flex items-stretch pl-[10px] gap-[24px] text-[15px] text-[#444] leading-[30px] whitespace-nowrap border-b border-[#c6cacd] relative">
        {["造型", "曲面", "线框", "直接编辑", "钣金", "FTI", "焊件", "点云"].map((m) => <div key={m}><T s={m} /></div>)}
        <div className="mx-[-11px] px-[11px] bg-[#fbfcfc] border border-b-0 border-[#c6cacd] h-[30px] mt-[2px] leading-[26px]">数据交换</div>
        {["修复", "PMI", "工具", "视觉样式", "查询", "电极", "App", "模具", "仿真"].map((m) => <div key={m}><T s={m} /></div>)}
        <div className="ml-auto flex items-center pr-0">
          <svg width="12" height="10" viewBox="0 0 12 10"><path d="M1 5L6 1L11 5M2 8.5L6 5.5L10 8.5" fill="none" stroke="#555" strokeWidth="1.6" /></svg>
          <div className="ml-[15px] w-[180px] h-[25px] bg-white border border-[#c3c8cc] flex items-center justify-between px-[3px] text-[15px] text-[#777]">
            <span>查找命令</span>
            <svg width="15" height="15" viewBox="0 0 15 15" className="mr-[4px]"><circle cx="7" cy="7" r="5.5" fill="none" stroke="#a9aeb2" /><path d="M11 11L14 14" stroke="#666" /></svg>
          </div>
          <svg width="20" height="20" viewBox="0 0 20 20" className="ml-[11px]"><circle cx="10" cy="10" r="6.5" fill="none" stroke="#9aa0a3" strokeWidth="3" strokeDasharray="3 2" /><circle cx="10" cy="10" r="3" fill="none" stroke="#9aa0a3" /></svg>
          <div className="ml-[16px] mr-[-10px] w-[13px] h-[18px] rounded-full bg-[#2f6fc0] border border-[#cdd8e2]" />
        </div>
      </div>

      {/* ribbon */}
      <div className="h-[118px] shrink-0 bg-[#fbfcfc] flex border-b border-[#c6cacd] py-[5px] items-stretch overflow-hidden">
        <RibbonGroup items={G1} label="输入" w="w-[764px]" px="pr-[12px]" gap="gap-[17px]" neg expand />
        <RibbonGroup items={G2} label="输出" w="w-[417px]" px="pl-[13px]" gap="gap-[16.5px]" />
        <RibbonGroup items={G3} label="数据操作" w="w-[499px]" px="pl-[13px]" gap="gap-[16.5px]" />
      </div>

      <Toolbar />
      <TabBar />

      <div className="flex-1 flex min-h-0 border-b border-[#f2f3f4]">
        <Panel />
        <Viewport />
      </div>

      <Status />
      <Taskbar />
    </div>
  );
}
